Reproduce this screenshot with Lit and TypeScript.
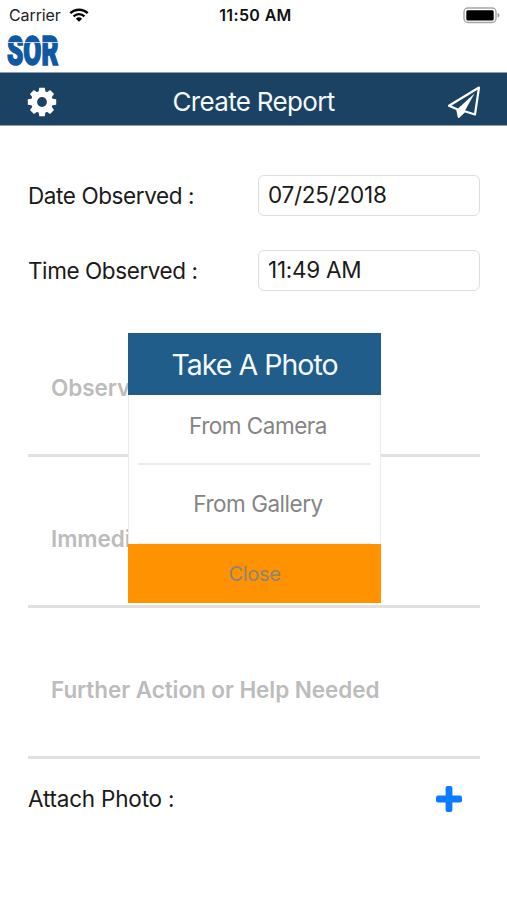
import { LitElement, html, css, svg } from "lit";
import { customElement, property } from "lit/decorators.js";

@customElement("status-bar")
class StatusBar extends LitElement {
  static styles = css`
    :host { display: grid; grid-template-columns: 1fr auto 1fr; align-items: center; height: 30px; padding: 0 5px 0 9px; color: #222; font-size: 16px; line-height: 18px; }
    .left { display: flex; align-items: center; gap: 8px; }
    .carrier { letter-spacing: -0.1px; }
    .time { font-weight: 600; color: #111; letter-spacing: 0.35px; }
    .battery { justify-self: end; margin-right: 2px; }
    svg { display: block; }
  `;
  render() {
    return html`
      <div class="left">
        <span class="carrier">Carrier</span>
        <svg width="20" height="14" viewBox="0 0 20 14">
          <path d="M1.3 5.2a12.6 12.6 0 0 1 17.4 0" fill="none" stroke="#000" stroke-width="2.5" />
          <path d="M4.5 8.4a8 8 0 0 1 11 0" fill="none" stroke="#000" stroke-width="2.3" />
          <path d="M10 13.8 6.9 10.7a4.5 4.5 0 0 1 6.2 0z" />
        </svg>
      </div>
      <span class="time">11:50 AM</span>
      <svg class="battery" width="37" height="17" viewBox="0 0 37 17">
        <rect x="1" y="1" width="32" height="14.5" rx="4" fill="#fff" stroke="#a5a5a5" stroke-width="1.4" />
        <rect x="3.3" y="3.2" width="27.4" height="10.2" rx="1.5" />
        <path d="M34.6 6v4.6c2.4-.7 2.4-3.9 0-4.6z" fill="#999" />
      </svg>`;
  }
}

@customElement("date-field")
class DateField extends LitElement {
  @property() label = "";
  @property() value = "";
  static styles = css`
    :host { display: grid; grid-template-columns: 1fr 222px; height: 41px; font-size: 22.5px; color: #1a1a1a; }
    .label { line-height: 41px; letter-spacing: -0.41px; white-space: nowrap; }
    .box { box-sizing: border-box; height: 41px; padding: 0 9px; border: 1px solid #dedede; border-radius: 6px; line-height: 37px; letter-spacing: -0.25px; }
  `;
  render() {
    return html`<span class="label">${this.label}</span><div class="box">${this.value}</div>`;
  }
}

@customElement("photo-dialog")
class PhotoDialog extends LitElement {
  static styles = css`
    :host { display: flex; flex-direction: column; width: 253px; height: 270px; background: #fff; text-align: center; color: #858585; }
    .title { height: 62px; line-height: 64px; background: #205d8b; color: #f4faff; font-size: 28.5px; letter-spacing: -0.98px; }
    .options { height: 149px; box-sizing: border-box; padding: 0 9px; border: solid #ebebeb; border-width: 0 1px; }
    .option { box-sizing: border-box; padding-left: 7px; border-bottom: 2px solid #ededed; font-size: 22.5px; letter-spacing: -0.48px; }
    .camera { height: 70px; line-height: 61px; }
    .gallery { height: 79px; line-height: 77px; border-bottom-width: 1px; }
    .close { height: 59px; line-height: 60px; background: #ff9200; font-size: 20px; letter-spacing: -0.3px; color: #8c8577; }
  `;
  render() {
    return html`
      <div class="title">Take A Photo</div>
      <div class="options">
        <div class="option camera">From Camera</div>
        <div class="option gallery">From Gallery</div>
      </div>
      <div class="close">Close</div>`;
  }
}

@customElement("app-root")
class AppRoot extends LitElement {
  static styles = css`
    :host { display: block; position: relative; width: 507px; height: 900px; overflow: hidden; background: #fff; font-family: Inter, "Liberation Sans", sans-serif; }
    svg { display: block; overflow: visible; }
    .brand { height: 42px; padding: 2px 0 0 6px; box-sizing: border-box; }
    .brand text { font: 900 41px Roboto, sans-serif; fill: #0e58a4; stroke: #0e58a4; stroke-width: 1.6; stroke-linejoin: miter; }
    .nav { display: grid; grid-template-columns: 60px 1fr 60px; align-items: center; height: 54px; box-sizing: border-box; padding: 5px 26px 0; background: #1b4163; border: solid #8ba0b4; border-width: 1px 0; color: #f4faff; }
    .title { text-align: center; font-size: 26px; line-height: 32px; letter-spacing: -0.68px; }
    .send { justify-self: end; }
    .form { padding: 49px 27px 0 28px; }
    .fields { display: grid; row-gap: 34px; }
    .note { box-sizing: border-box; height: 151px; padding: 0 23px; border-bottom: 3px solid #e1e1e1; line-height: 164px; font-size: 22.5px; letter-spacing: -0.07px; font-weight: 600; color: #bcbcbc; white-space: nowrap; }
    .notes { margin-top: 15px; }
    .attach { display: flex; justify-content: space-between; align-items: center; height: 80px; padding-right: 18px; font-size: 22.5px; color: #1a1a1a; }
    .caption { letter-spacing: -0.2px; padding-bottom: 1px; }
    .overlay { position: absolute; left: 128px; top: 333px; }
  `;
  render() {
    const teeth = [0, 45, 90, 135, 180, 225, 270, 315];
    return html`
      <status-bar></status-bar>
      <div class="brand">
        <svg width="54" height="38" viewBox="0 0 54 38">
          <text x="1" y="32.6" textLength="51.5" lengthAdjust="spacingAndGlyphs">SOR</text>
          <path d="M0 10.5h54" stroke="#fff" stroke-width="1" stroke-opacity=".7" />
        </svg>
      </div>
      <div class="nav">
        <svg width="32" height="30" viewBox="-16 -15 32 30">
          ${teeth.map((a) => svg`<path d="M-3.6-9-2.8-14.2h5.6L3.6-9z" fill="#fff" transform="rotate(${a})" />`)}
          <circle r="7.9" fill="none" stroke="#fff" stroke-width="6" />
        </svg>
        <div class="title">Create Report</div>
        <svg class="send" width="34" height="34" viewBox="0 0 34 34">
          <path d="M32 2.5 2 20.8 10.2 24.3 11.8 31.8 17.6 26.2 28 29.5z" fill="none" stroke="#fff" stroke-width="2.2" stroke-linejoin="round" />
          <path d="M10.2 24.3 27.5 8.5 17.6 26.2 11.8 32.5z" fill="#fff" />
        </svg>
      </div>
      <div class="form">
        <div class="fields">
          <date-field label="Date Observed :" value="07/25/2018"></date-field>
          <date-field label="Time Observed :" value="11:49 AM"></date-field>
        </div>
        <div class="notes">
          <div class="note">Observation</div>
          <div class="note">Immediate Action</div>
          <div class="note">Further Action or Help Needed</div>
        </div>
        <div class="attach">
          <span class="caption">Attach Photo :</span>
          <svg width="26" height="26" viewBox="0 0 26 26">
            <rect x="9.6" y="0" width="6.8" height="26" rx="2" fill="#0a7cff" />
            <rect x="0" y="9.6" width="26" height="6.8" rx="2" fill="#0a7cff" />
          </svg>
        </div>
      </div>
      <photo-dialog class="overlay"></photo-dialog>`;
  }
}
